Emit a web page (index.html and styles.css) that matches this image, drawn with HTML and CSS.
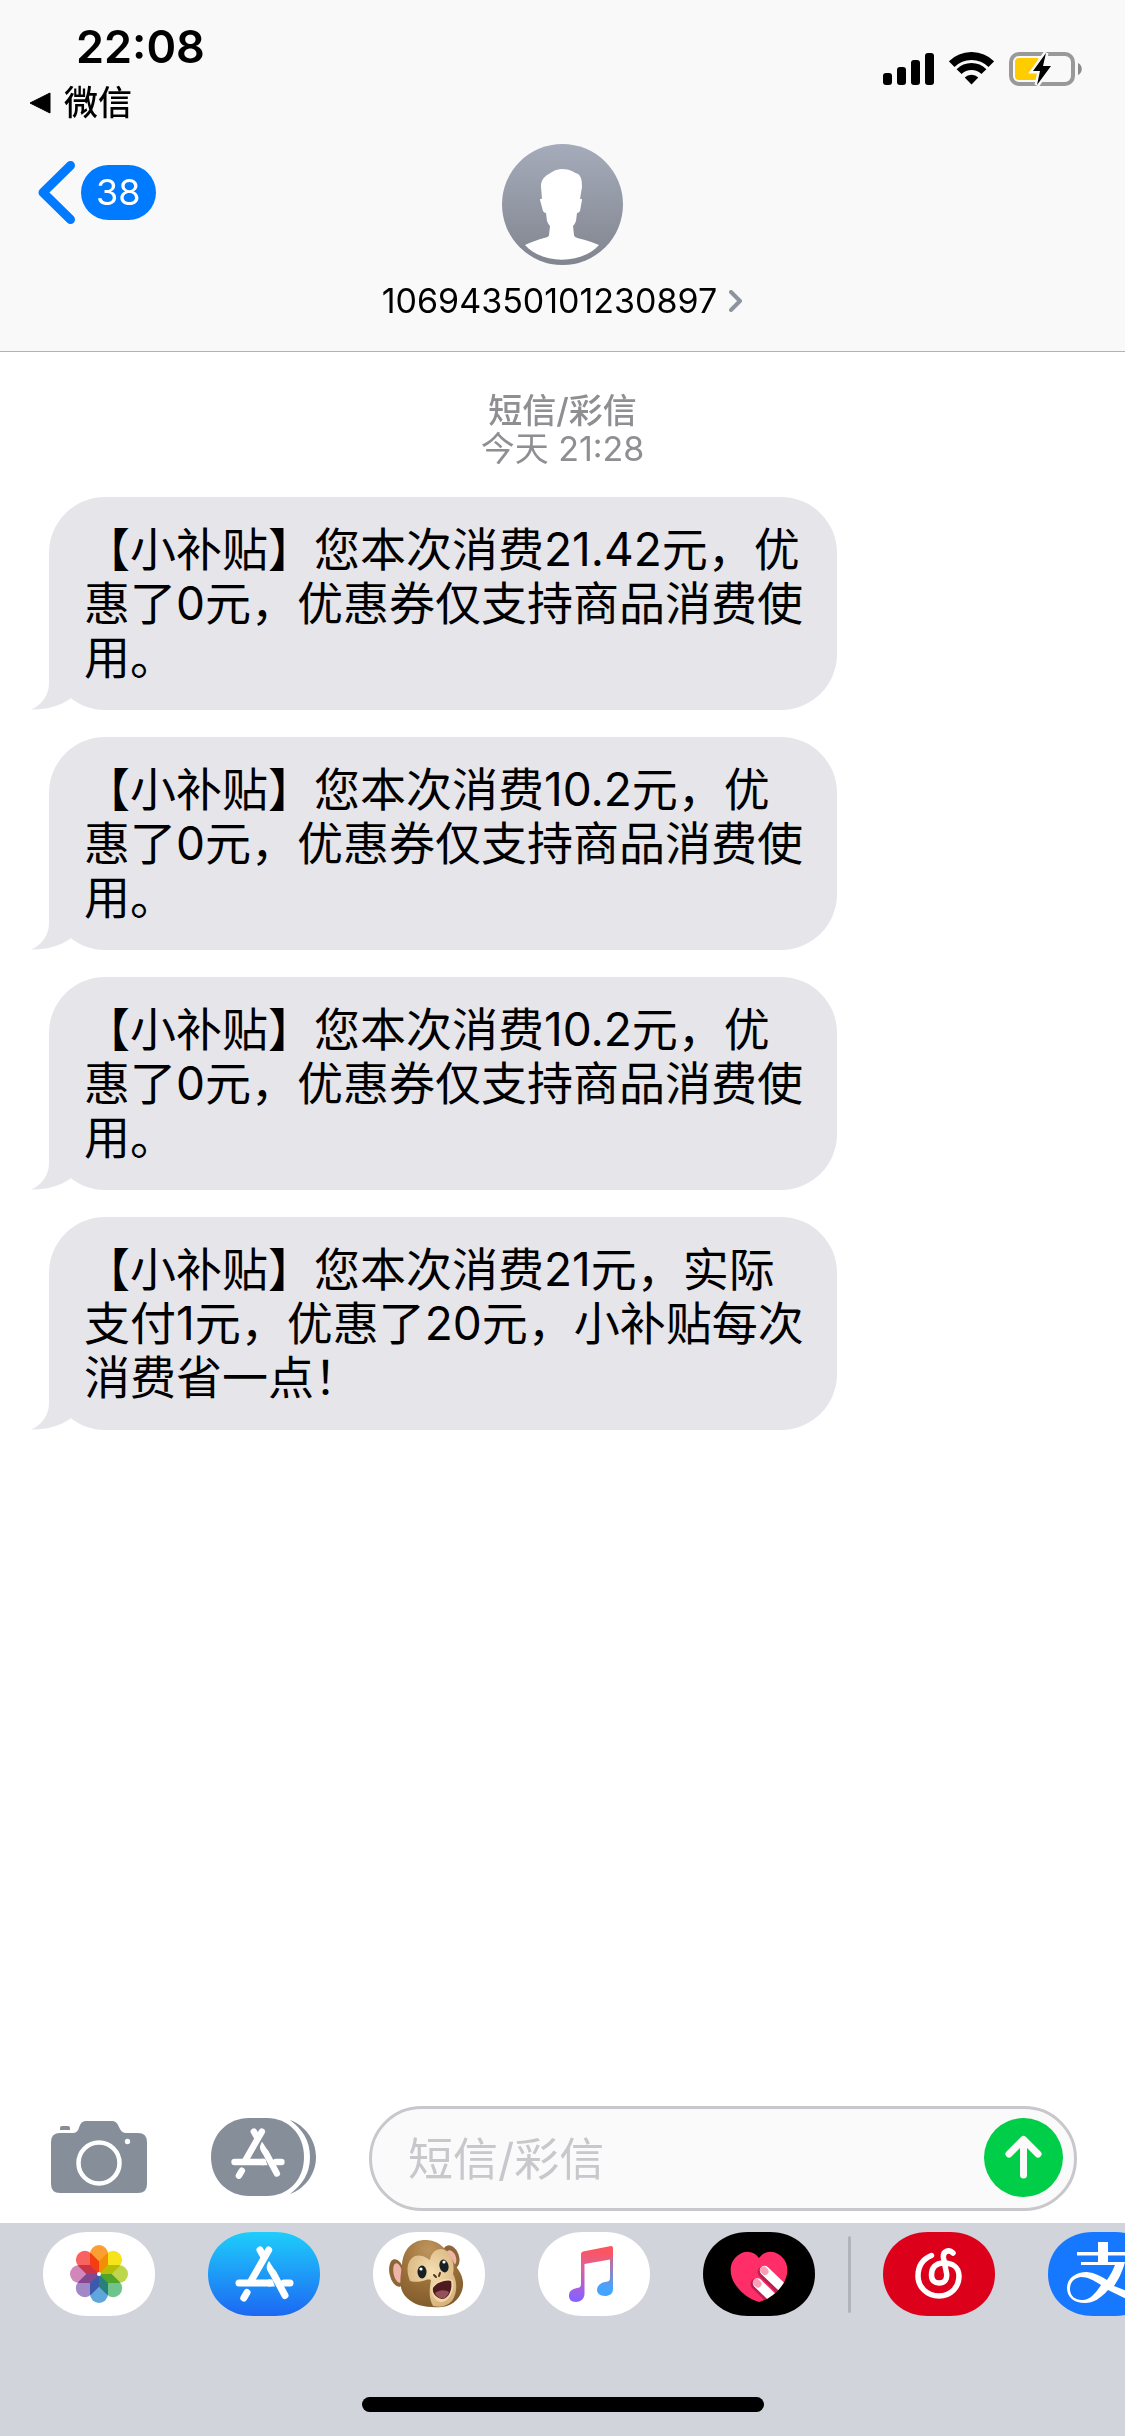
FILE: index.html
```html
<!DOCTYPE html>
<html lang="zh-CN">
<head>
<meta charset="utf-8">
<meta name="viewport" content="width=device-width, initial-scale=1">
<title>10694350101230897</title>
<link rel="stylesheet" href="styles.css">
</head>
<body>
<svg class="defs" width="0" height="0" aria-hidden="true">
  <defs>
    <path id="pill" d="M0 42C0 17 20 0 45 0H67C92 0 112 17 112 42S92 84 67 84H45C20 84 0 67 0 42Z"/>
    <g id="store-a" fill="none" stroke="#fff" stroke-width="7" stroke-linecap="round">
      <path d="M60.700 18L43 49"/>
      <path d="M52 18L56 25"/>
      <path d="M31 51H62"/>
      <path d="M76 51H82"/>
      <path d="M39 60.500L35.800 66" stroke-width="7"/>
      <path d="M65 41L77 63.500"/>
      <path d="M61 29C57 35 59 38 61.500 42L68 40Z" fill="#fff" stroke="none"/>
      <path d="M60 47.500H64L67 54.500H60Z" fill="#fff" stroke="none"/>
    </g>
    <linearGradient id="store-blue" x1="0" y1="0" x2="0" y2="1">
      <stop offset="0" stop-color="#1fcdfb"/><stop offset="1" stop-color="#1c68f3"/>
    </linearGradient>
    <linearGradient id="avatar-gray" x1="0" y1="0" x2="0" y2="1">
      <stop offset="0" stop-color="#a5abba"/><stop offset="1" stop-color="#81858f"/>
    </linearGradient>
  </defs>
</svg>

<header class="header">
  <div class="status">
    <div class="status-left">
      <time class="clock">22:08</time>
      <a class="return" href="#"><svg width="22" height="22" viewBox="0 0 22 22" aria-hidden="true"><path d="M1 11L21 1V21Z" stroke="#000" stroke-width="1" stroke-linejoin="round"/></svg>微信</a>
    </div>
    <div class="status-icons">
      <svg width="51" height="33" viewBox="0 0 51 33" aria-hidden="true"><rect y="21" width="9" height="12" rx="3"/><rect x="14" y="15" width="9" height="18" rx="3"/><rect x="28" y="8" width="9" height="25" rx="3"/><rect x="42" y="1" width="9" height="32" rx="3"/></svg>
      <svg width="45" height="33" viewBox="0 0 45 33" aria-hidden="true"><g fill="none" stroke="#000"><path d="M2.700 12.200A28 28 0 0 1 42.300 12.200" stroke-width="8"/><path d="M10.100 19.600A17.500 17.500 0 0 1 34.900 19.600" stroke-width="7"/></g><path d="M22.500 32.500L15.700 25.500A9.500 9.500 0 0 1 29.300 25.500Z"/></svg>
      <svg width="73" height="34" viewBox="0 0 73 34" aria-hidden="true"><rect x="2" y="2" width="62" height="30" rx="8" fill="none" stroke="#999" stroke-width="4"/><rect x="6" y="6" width="25" height="22" rx="4" fill="#fc0"/><path d="M69 11C74 13 74 21 69 23Z" fill="#8b8b8b"/><path d="M37 1L24 19H31L28 33L42 14H34Z" stroke="#f9f9f9" stroke-width="5" paint-order="stroke"/></svg>
    </div>
  </div>
  <nav class="nav">
    <a class="back" href="#" aria-label="返回">
      <svg width="37" height="63" viewBox="0 0 37 63" fill="none" stroke="#007aff" stroke-width="9" stroke-linecap="round" stroke-linejoin="round" aria-hidden="true"><path d="M32.500 4.500L5 31.500L32.500 58.500"/></svg>
      <span class="unread">38</span>
    </a>
    <a class="contact" href="#">
      <svg width="121" height="121" viewBox="0 0 121 121" aria-hidden="true"><circle cx="60.500" cy="60.500" r="60.500" fill="url(#avatar-gray)"/><path fill="#fff" d="M60 25C53 25 49 29 45 31C40 35 39 38 39 43L40 55Q38 54 38 56L41 67Q42 69 44 69L45 77Q46 80 48 82L47 91Q47 93 42 94C35 96 29 98 23 101C41 121 80 120 97 101C90 98 84 96 77 94.500Q72 93 72 91L71 82Q73 80 74 77L75 69Q77 69 78 67L80 56Q80 54 78 55L80 43C80 36 79 32 76 30C71 28 68 25 60 25Z"/></svg>
      <span class="number">10694350101230897<svg width="14" height="22" viewBox="0 0 14 22" fill="none" stroke="#8e949f" stroke-width="4" stroke-linecap="round" stroke-linejoin="round" aria-hidden="true"><path d="M2 2L11 11L2 20"/></svg></span>
    </a>
  </nav>
</header>

<main class="thread">
  <p class="stamp"><span class="kind">短信/彩信</span><span>今天 21:28</span></p>
  <div class="messages">
    <p class="bubble">【小补贴】您本次消费21.42元，优惠了0元，优惠券仅支持商品消费使用。<svg class="tail" width="40" height="60" viewBox="0 0 40 60" aria-hidden="true"><path d="M18 0V33C18 47 9 56 0 59.500C14 60 29 56 39 49V0Z"/></svg></p>
    <p class="bubble">【小补贴】您本次消费10.2元，优惠了0元，优惠券仅支持商品消费使用。<svg class="tail" width="40" height="60" viewBox="0 0 40 60" aria-hidden="true"><path d="M18 0V33C18 47 9 56 0 59.500C14 60 29 56 39 49V0Z"/></svg></p>
    <p class="bubble">【小补贴】您本次消费10.2元，优惠了0元，优惠券仅支持商品消费使用。<svg class="tail" width="40" height="60" viewBox="0 0 40 60" aria-hidden="true"><path d="M18 0V33C18 47 9 56 0 59.500C14 60 29 56 39 49V0Z"/></svg></p>
    <p class="bubble">【小补贴】您本次消费21元，实际支付1元，优惠了20元，小补贴每次消费省一点！<svg class="tail" width="40" height="60" viewBox="0 0 40 60" aria-hidden="true"><path d="M18 0V33C18 47 9 56 0 59.500C14 60 29 56 39 49V0Z"/></svg></p>
  </div>
</main>

<form class="composer">
  <button class="tool camera" type="button" aria-label="相机">
    <svg width="96" height="72" viewBox="0 0 96 72" aria-hidden="true"><path fill="#868e99" d="M9 12H22Q26 12 27.500 8L29 4Q31 0 35 0H61Q65 0 67 4L69 8Q71 12 75 12H87Q96 12 96 21V63Q96 72 87 72H9Q0 72 0 63V21Q0 12 9 12Z"/><path fill="#868e99" d="M9 9V7Q9 5 11 5H17Q19 5 19 7V9Z"/><circle cx="48" cy="42" r="20.500" fill="none" stroke="#fff" stroke-width="4.500"/><circle cx="76.500" cy="20.500" r="2.700" fill="#fff"/></svg>
  </button>
  <button class="tool apps" type="button" aria-label="应用">
    <svg width="105" height="78" viewBox="0 0 105 78" aria-hidden="true"><path fill="#868e99" d="M0 39C0 16 17 0 38 0H56C77 0 93 16 93 39S77 78 56 78H38C17 78 0 62 0 39Z"/><path fill="#868e99" d="M79 2C93 7 105 21 105 39S93 71 79 76C91 67 99 56 99 39S91 11 79 2Z"/><use href="#store-a" transform="translate(-5 -3) scale(.92)"/></svg>
  </button>
  <div class="field">
    <input class="text" type="text" placeholder="短信/彩信" aria-label="短信/彩信">
    <button class="send" type="submit" aria-label="发送">
      <svg width="37" height="44" viewBox="0 0 37 44" fill="none" stroke="#fafafa" stroke-width="7" stroke-linecap="round" stroke-linejoin="round" aria-hidden="true"><path d="M18.500 40V5"/><path d="M4 19L18.500 4.500L33 19"/></svg>
    </button>
  </div>
</form>

<footer class="tray">
  <div class="strip">
    <button class="app" type="button" aria-label="照片">
      <svg width="112" height="84" viewBox="0 0 112 84" aria-hidden="true"><use href="#pill" fill="#fff"/><g class="petals" transform="translate(56 42)"><path d="M-9 -9V-20A9 9 0 0 1 9 -20V-9L0 0Z" fill="#fb9f32"/><path d="M-9 -9V-20A9 9 0 0 1 9 -20V-9L0 0Z" fill="#f7e31a" transform="rotate(45)"/><path d="M-9 -9V-20A9 9 0 0 1 9 -20V-9L0 0Z" fill="#bdd64c" transform="rotate(90)"/><path d="M-9 -9V-20A9 9 0 0 1 9 -20V-9L0 0Z" fill="#6fc38d" transform="rotate(135)"/><path d="M-9 -9V-20A9 9 0 0 1 9 -20V-9L0 0Z" fill="#5ea6dc" transform="rotate(180)"/><path d="M-9 -9V-20A9 9 0 0 1 9 -20V-9L0 0Z" fill="#a188c6" transform="rotate(225)"/><path d="M-9 -9V-20A9 9 0 0 1 9 -20V-9L0 0Z" fill="#d187ba" transform="rotate(270)"/><path d="M-9 -9V-20A9 9 0 0 1 9 -20V-9L0 0Z" fill="#f8625f" transform="rotate(315)"/></g><circle cx="56" cy="42" r="2" fill="#fff"/></svg>
    </button>
    <button class="app" type="button" aria-label="App Store">
      <svg width="112" height="84" viewBox="0 0 112 84" aria-hidden="true"><use href="#pill" fill="url(#store-blue)"/><use href="#store-a"/></svg>
    </button>
    <button class="app" type="button" aria-label="拟我表情">
      <svg width="112" height="84" viewBox="0 0 112 84" aria-hidden="true">
        <defs>
          <radialGradient id="fur" cx=".45" cy=".15" r=".9"><stop offset="0" stop-color="#bd955c"/><stop offset=".45" stop-color="#a0743c"/><stop offset="1" stop-color="#7d592b"/></radialGradient>
          <radialGradient id="face" cx=".5" cy=".4" r=".7"><stop offset="0" stop-color="#f5dfb2"/><stop offset="1" stop-color="#d3ac74"/></radialGradient>
        </defs>
        <use href="#pill" fill="#fff"/>
        <ellipse cx="24" cy="41" rx="7.500" ry="14" transform="rotate(-12 24 41)" fill="#8c6637"/><ellipse cx="25" cy="41" rx="4.500" ry="10" transform="rotate(-12 25 41)" fill="#eeb3a9"/>
        <ellipse cx="78" cy="25" rx="8" ry="12" transform="rotate(-20 78 25)" fill="#8c6637"/><ellipse cx="78" cy="26" rx="5" ry="8" transform="rotate(-20 78 26)" fill="#eeb3a9"/>
        <path fill="url(#fur)" d="M29 33C30 15 42 7 54 8C68 9 75 19 81 31C85 38 89 41 90 50C91 62 82 74 69 75C55 76 42 74 34 66C24 57 28 43 29 33Z"/>
        <path fill="url(#face)" d="M37 49C32 37 35 27 42 24C49 22 54 26 57 28C58 20 65 15 72 18C79 21 82 34 80 42C84 49 85 60 79 69Q71 77 60 74C56 67 56 59 58 48C53 46 49 52 37 49Z"/>
        <ellipse cx="49" cy="40" rx="4.500" ry="6.500" fill="#182024"/><ellipse cx="71" cy="34" rx="4.500" ry="6.500" transform="rotate(-15 71 34)" fill="#182024"/><circle cx="48" cy="37" r="1.600" fill="#fff"/><circle cx="71" cy="30" r="1.600" fill="#fff"/>
        <path d="M61 43L63 45M67 41L66 44" stroke="#5b351b" stroke-width="2" stroke-linecap="round"/>
        <path fill="#f2d8a9" d="M58 56C60 48 76 44 80 49C82 60 75 70 68 70C62 69 58 63 58 56Z"/>
        <path fill="#4d1a1f" d="M60 56C63 50 75 47 78 49C80 58 75 67 69 67C63 66 59 61 60 56Z"/><path fill="#945057" d="M62 61C67 57 73 58 76 60C73 69 65 68 62 61Z"/>
      </svg>
    </button>
    <button class="app" type="button" aria-label="音乐">
      <svg width="112" height="84" viewBox="0 0 112 84" aria-hidden="true">
        <defs>
          <linearGradient id="note" gradientUnits="userSpaceOnUse" x1="52" y1="18" x2="46" y2="68"><stop offset="0" stop-color="#fb5560"/><stop offset=".35" stop-color="#e0609a"/><stop offset="1" stop-color="#8761ff"/></linearGradient>
          <linearGradient id="note-right" gradientUnits="userSpaceOnUse" x1="73" y1="20" x2="72" y2="56"><stop offset="0" stop-color="#e75b7d"/><stop offset="1" stop-color="#45a4ff"/></linearGradient>
        </defs>
        <use href="#pill" fill="#fff"/>
        <path fill="url(#note)" d="M43 22Q43 20 45 19.500L73 14Q75 14 75 16V27L46.500 32V62C46.500 67 42 70 38 70C33 70 31 67 31 64C31 59 34 57 39 56C42 55.500 43 55 43 51Z"/>
        <path fill="url(#note-right)" d="M72 27L75 23V57C75 62 71 64 67 64C62 64 59 61 59 58C59 54 62 51 67 50C71 49.500 72 49 72 45Z"/>
      </svg>
    </button>
    <button class="app" type="button" aria-label="Digital Touch">
      <svg width="112" height="84" viewBox="0 0 112 84" aria-hidden="true">
        <defs><clipPath id="heart"><path d="M56 26C61 19 69 18 75 22C87 29 86 43 80 52C74 61 66 67 56 70C46 67 38 61 32 52C26 43 25 29 37 22C43 18 51 19 56 26Z"/></clipPath></defs>
        <use href="#pill"/>
        <g clip-path="url(#heart)"><path fill="#ff2d68" d="M20 15H92V75H20Z"/><path d="M60 40L82 62M53 52L75 74" stroke="#bd1d50" stroke-width="11" stroke-linecap="round"/><path d="M61.500 38.500L84 60M54.500 51L77 73" stroke="#fff" stroke-width="9.500" stroke-linecap="round"/><path d="M60.500 38L62 39.500M53.500 50.500L55 52" stroke="#fb9db4" stroke-width="7" stroke-linecap="round"/></g>
      </svg>
    </button>
    <span class="divider"></span>
    <button class="app" type="button" aria-label="网易云音乐">
      <svg width="112" height="84" viewBox="0 0 112 84" aria-hidden="true"><use href="#pill" fill="#dd001b"/><path fill="none" stroke="#fff" stroke-width="5.500" stroke-linecap="round" d="M48.500 23.500C40 27 35 34 35 44C35 55 44 64 56 64C68 64 76 55 76 44C76 35 69 31 61 31C52 31 48.500 36 48.500 43C48.500 49 52 51 56 51C62 51 64.500 47 63.500 41L60.500 26C59.500 19 66 17 70 21"/></svg>
    </button>
    <button class="app" type="button" aria-label="支付宝">
      <svg width="112" height="84" viewBox="0 0 112 84" aria-hidden="true"><use href="#pill" fill="#1677ff"/><path fill="#fff" d="M50 10H60V20H84V23.500H60V30H77C74 41 70 48 66 54L95 65V75L60 58C52 67 45 71 37 71C26 71 19 65 19 56C19 46 28 40 39 40C47 41 53 44 59 48C63 42 65 38 67 33H33V30H50V23.500H29V20H50Z"/><path fill="#1677ff" d="M53 53C45 48 40 45 33 45C26 46 22 50 22 57C22 64 27 68 34 68C43 68 49 59 53 53Z"/></svg>
    </button>
  </div>
  <div class="home"></div>
</footer>
</body>
</html>
```
FILE: styles.css
```css
* {
  box-sizing: border-box;
}

body {
  margin: 0;
  min-height: 100vh;
  display: flex;
  flex-direction: column;
  background: #fff;
  color: #000;
  font-family: Inter, "Noto Sans CJK SC", sans-serif;
  overflow-x: hidden;
}

svg {
  display: block;
  flex: none;
}

a {
  color: inherit;
  text-decoration: none;
}

p {
  margin: 0;
}

button {
  padding: 0;
  border: 0;
  background: none;
  flex: none;
  display: block;
}

.defs {
  position: absolute;
}

.header {
  background: #f9f9f9;
  border-bottom: 1px solid #b2b2b2;
  padding: 23px 43px 30px 29px;
}

.status {
  display: flex;
  justify-content: space-between;
}

.status-left {
  display: flex;
  flex-direction: column;
  gap: 12px;
}

.clock {
  padding-left: 47px;
  font-size: 45px;
  line-height: 48px;
  font-weight: 600;
}

.return {
  display: flex;
  align-items: center;
  gap: 13px;
  font-size: 34px;
  line-height: 40px;
  font-weight: 500;
}

.status-icons {
  display: flex;
  align-items: flex-start;
  gap: 15px;
  padding-top: 29px;
}

.nav {
  display: grid;
  grid-template-columns: 1fr auto 1fr;
  align-items: start;
  margin-top: 21px;
  margin-right: -14px;
}

.back {
  display: flex;
  align-items: center;
  gap: 6px;
  padding: 17px 0 0 9px;
}

.unread {
  padding: 0 15px;
  border-radius: 28px;
  background: #007aff;
  color: #fff;
  font-size: 36px;
  line-height: 55px;
}

.contact {
  display: flex;
  flex-direction: column;
  align-items: center;
  gap: 16px;
}

.number {
  display: flex;
  align-items: center;
  gap: 12px;
  font-size: 34px;
  line-height: 40px;
}

.thread {
  flex: 1;
  padding: 40px 49px;
}

.stamp {
  display: flex;
  flex-direction: column;
  align-items: center;
  color: #8e8e93;
  font-size: 34px;
  line-height: 38px;
}

.kind {
  font-weight: 500;
}

.messages {
  display: flex;
  flex-direction: column;
  align-items: flex-start;
  gap: 27px;
  margin-top: 29px;
}

.bubble {
  position: relative;
  max-width: 788px;
  padding: 25px 28px 26px 35px;
  border-radius: 56px;
  background: #e5e5ea;
  font-size: 46px;
  line-height: 54px;
}

.tail {
  position: absolute;
  left: -18px;
  bottom: 0;
  fill: #e5e5ea;
}

.composer {
  display: flex;
  align-items: center;
  padding: 0 48px 12px 51px;
}

.tool {
  padding-bottom: 4px;
}

.apps {
  margin: 0 53px 0 64px;
}

.field {
  flex: 1;
  min-width: 0;
  display: flex;
  align-items: center;
  height: 105px;
  padding: 0 11px 3px 36px;
  border: 3px solid #c7c7cc;
  border-radius: 53px;
  background: #fafafa;
}

.text {
  flex: 1;
  min-width: 0;
  padding: 6px 0 0;
  border: 0;
  outline: 0;
  background: none;
  font: inherit;
  font-size: 45px;
  line-height: 60px;
}

.text::placeholder {
  color: #c7c7cc;
  opacity: 1;
}

.send {
  display: flex;
  align-items: center;
  justify-content: center;
  width: 79px;
  height: 79px;
  border-radius: 50%;
  background: #00ce48;
}

.tray {
  display: flex;
  flex-direction: column;
  align-items: center;
  gap: 81px;
  padding: 9px 0 24px;
  background: #d1d4db;
}

.strip {
  align-self: stretch;
  display: flex;
  align-items: center;
  gap: 53px;
  padding-left: 43px;
  overflow: hidden;
}

.petals {
  isolation: isolate;
}

.petals path {
  mix-blend-mode: multiply;
}

.divider {
  flex: none;
  width: 3px;
  height: 77px;
  margin: 0 -21px 0 -20px;
  border-radius: 2px;
  background: #b1b4ba;
}

.home {
  width: 402px;
  height: 15px;
  border-radius: 8px;
  background: #000;
}
```
